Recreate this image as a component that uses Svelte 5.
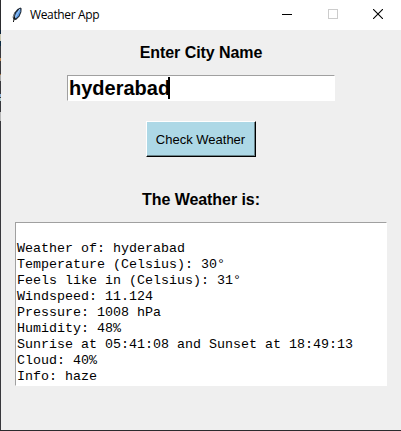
<script>
  const lines = [
    'Weather of: hyderabad',
    'Temperature (Celsius): 30°',
    'Feels like in (Celsius): 31°',
    'Windspeed: 11.124',
    'Pressure: 1008 hPa',
    'Humidity: 48%',
    'Sunrise at 05:41:08 and Sunset at 18:49:13',
    'Cloud: 40%',
    'Info: haze'
  ];
  const city = 'hyderabad';
</script>

<div class="screen">
  <div class="window">
    <header>
      <svg class="feather" width="14" height="18" viewBox="0 0 14 18">
        <path d="M10.5 1.5 L11.6 2.5 L11.4 6 L9.5 10.5 L6 14 L3.6 13.5 L2.6 11 L4.5 6.5 L7.5 3 Z" fill="#1c2530" />
        <path d="M10.3 2.6 L10.5 5.5 L8.6 10 L5.8 12.6 L4.8 10 L6.3 6.5 Z" fill="#5b9be6" />
        <path d="M9.8 3 L5 12" stroke="#a9cdf5" stroke-width="0.9" />
        <path d="M4.6 11 L3.4 16" stroke="#111" stroke-width="1" />
        <path d="M4.3 7.5 L3.4 11.5" stroke="#878b90" stroke-width="1" />
      </svg>
      <span class="title">Weather App</span>
      <div class="controls">
        <svg width="10" height="10"><path d="M0 5.5H10" stroke="#000" /></svg>
        <svg width="10" height="10"><rect x=".5" y=".5" width="9" height="9" fill="none" stroke="#ccc" /></svg>
        <svg width="10" height="10"><path d="M0 0L10 10M10 0L0 10" stroke="#000" stroke-width="1.1" /></svg>
      </div>
    </header>
    <main>
      <div class="label first">Enter City Name</div>
      <div class="entry"><span>{city}</span><i class="caret"></i></div>
      <button>Check Weather</button>
      <div class="label second">The Weather is:</div>
      <div class="output">
        <div class="line"></div>
        {#each lines as line}
          <div class="line">{line}</div>
        {/each}
      </div>
    </main>
  </div>
</div>

<style>
  :global(body) {
    margin: 0;
    overflow: hidden;
  }
  .screen {
    box-sizing: border-box;
    width: 401px;
    height: 431px;
    padding: 0 0 1px 1px;
    background:
      linear-gradient(#0b2238 0 4px, #c9c6b0 4px 11px, #0b2a42 11px 16px, #38383c 16px 28px, #b98552 28px 31px, #38383c 31px 44px, #a5733c 44px 45px, #aaa 45px 51px, #38383c 51px 64px, #8fb2d6 64px 67px, #38383c 67px 68px, #b4d0d2 68px 71px, #38383c 71px 82px, #b8b8b8 82px 91px, #38383c 91px) 0 30px / 1px 400px no-repeat,
      #2b2b2e;
  }
  .window {
    height: 430px;
    display: flex;
    flex-direction: column;
    background: #efefef;
    font-family: "Liberation Sans", Arial, sans-serif;
    color: #000;
  }
  header {
    height: 30px;
    flex: none;
    display: flex;
    align-items: center;
    background: #fff;
    box-sizing: border-box;
    padding: 0 18px 0 9px;
  }
  .feather {
    margin-top: -1px;
  }
  .title {
    margin-left: 6px;
    font: 12px/16px "Open Sans", "Noto Sans", sans-serif;
    letter-spacing: -0.35px;
    white-space: nowrap;
  }
  .controls {
    margin-left: auto;
    margin-top: -2px;
    display: flex;
    gap: 35px;
  }
  .controls svg {
    display: block;
  }
  .controls svg:first-child {
    margin-right: 1px;
  }
  main {
    display: flex;
    flex-direction: column;
    align-items: center;
    flex: 1;
  }
  .label {
    font-size: 16px;
    line-height: 18px;
    font-weight: bold;
    letter-spacing: -0.07px;
    white-space: nowrap;
  }
  .first {
    margin-top: 14px;
  }
  .entry {
    box-sizing: border-box;
    width: 268px;
    height: 26px;
    margin-top: 13px;
    display: flex;
    align-items: center;
    padding: 0 1px;
    border: 1px solid #fff;
    border-top-color: #a0a0a0;
    border-left-color: #a0a0a0;
    background: #fff;
    font-size: 20px;
    line-height: 24px;
    font-weight: bold;
  }
  .caret {
    width: 2px;
    height: 22px;
    margin-left: -2px;
    background: #000;
  }
  button {
    box-sizing: border-box;
    width: 110px;
    height: 36px;
    margin: 20px 0 0;
    padding: 1px 1px 0 0;
    border: 1px solid #fff;
    border-right-color: #000;
    border-bottom-color: #000;
    border-radius: 0;
    background: #add8e6;
    box-shadow: inset -1px -1px #698389;
    color: #000;
    font: 13px/16px "Liberation Sans", Arial, sans-serif;
    white-space: nowrap;
  }
  .second {
    margin-top: 34px;
  }
  .output {
    box-sizing: border-box;
    width: 372px;
    height: 164px;
    margin-top: 13px;
    padding: 2px 1px 0;
    border: 1px solid #fff;
    border-top-color: #a0a0a0;
    border-left-color: #a0a0a0;
    background: #fff;
    font: 13.333px/16px "Liberation Mono", "Courier New", monospace;
  }
  .line {
    height: 16px;
    white-space: pre;
  }
</style>
